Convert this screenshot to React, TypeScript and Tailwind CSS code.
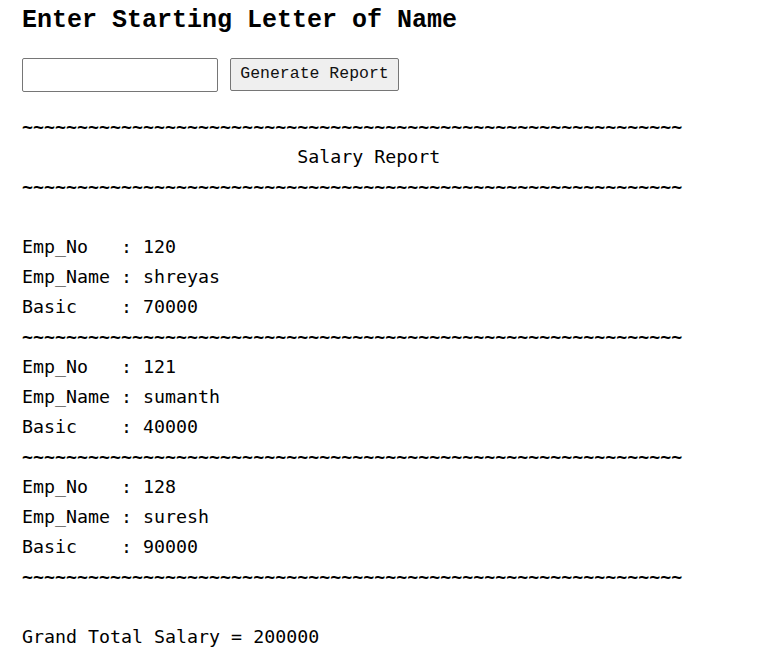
const employees = [
  { no: 120, name: 'shreyas', basic: 70000 },
  { no: 121, name: 'sumanth', basic: 40000 },
  { no: 128, name: 'suresh', basic: 90000 },
];

const line = '~'.repeat(60);

function Rule() {
  return <span className="font-bold">{line + '\n'}</span>;
}

export default function App() {
  const total = employees.reduce((s, e) => s + e.basic, 0);

  return (
    <div className="min-h-screen bg-white px-[22px] pt-[6px] text-black">
      <h1 className="font-['Liberation_Mono',monospace] text-[25px] font-bold leading-[30px]">
        Enter Starting Letter of Name
      </h1>

      <div className="mt-[22px] flex items-start gap-[12px]">
        <input
          type="text"
          className="h-[34px] w-[196px] rounded-[2px] border border-[#767676] bg-white px-1"
        />
        <button className="h-[33px] w-[169px] rounded-[2px] border border-[#767676] bg-[#efefef] font-['Liberation_Mono',monospace] text-[16.5px] text-[#111]">
          Generate Report
        </button>
      </div>

      <pre className="mt-[20px] font-['DejaVu_Sans_Mono',monospace] text-[18.3px] leading-[30px]">
        <Rule />
        {'                         Salary Report\n'}
        <Rule />
        {'\n'}
        {employees.map((e) => (
          <span key={e.no}>
            {`Emp_No   : ${e.no}\n`}
            {`Emp_Name : ${e.name}\n`}
            {`Basic    : ${e.basic}\n`}
            <Rule />
          </span>
        ))}
        {'\n'}
        {`Grand Total Salary = ${total}`}
      </pre>
    </div>
  );
}
